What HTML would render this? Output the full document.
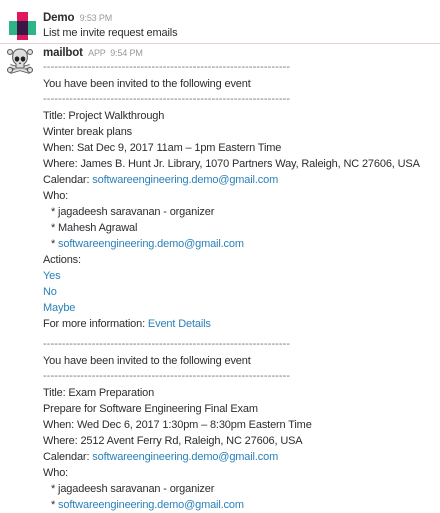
<!DOCTYPE html>
<html><head><style>
body{margin:0;width:440px;height:505px;overflow:hidden;background:#fff;font-family:"Liberation Sans",sans-serif;color:#2c2d30;position:relative}
.l{position:absolute;left:43px;font-size:11px;line-height:16px;white-space:nowrap;letter-spacing:-0.15px}
.a{color:#2a80b9}
.ind{left:51px}
.n{font-weight:bold;font-size:11.5px}
.t{color:#9a9a9a;font-size:9px;font-weight:normal}
.d{color:#777;letter-spacing:0.08px}
</style></head><body>
<div class="l d" style="top:-10px;left:140px">------------------------------------------------------------------</div>
<div style="position:absolute;left:17px;top:12px;width:11px;height:28px;background:#e0195e"></div>
<div style="position:absolute;left:9px;top:21px;width:27px;height:14px;background:#2fb48a"></div>
<div style="position:absolute;left:17px;top:21px;width:11px;height:14px;background:#3b1745"></div>
<div class="l" style="top:10px"><span class="n">Demo</span> <span class="t">&nbsp;9:53 PM</span></div>
<div class="l" style="top:25px">List me invite request emails</div>
<div style="position:absolute;left:0;top:43px;width:440px;height:1px;background:#eccfd0"></div>
<svg style="position:absolute;left:7px;top:47px" width="26" height="27" viewBox="0 0 26 27">
<g fill="#ddd" stroke="#555" stroke-width="1"><path d="M3 19 L23 25 M23 19 L3 25" stroke-width="4" stroke="#555"/><path d="M3 19 L23 25 M23 19 L3 25" stroke-width="2.4" stroke="#ddd"/>
<circle cx="3" cy="5" r="2.5"/><circle cx="23" cy="5" r="2.5"/><circle cx="3" cy="23" r="2.5"/><circle cx="23" cy="23" r="2.5"/>
<path d="M13 2 C6 2 5 8 6 13 C7 16 8 16 9 17 L9 21 L17 21 L17 17 C18 16 19 16 20 13 C21 8 20 2 13 2Z"/></g>
<ellipse cx="10" cy="12" rx="2.3" ry="2.6" fill="#222"/><ellipse cx="16" cy="12" rx="2.3" ry="2.6" fill="#222"/><path d="M13 15 l-1 2 h2z" fill="#222"/>
</svg>
<div class="l" style="top:45px"><span class="n">mailbot</span> <span class="t">&nbsp;APP &nbsp;9:54 PM</span></div>
<div class="l d" style="top:59px">------------------------------------------------------------------</div>
<div class="l" style="top:76px">You have been invited to the following event</div>
<div class="l d" style="top:91px">------------------------------------------------------------------</div>
<div class="l" style="top:108px">Title: Project Walkthrough</div>
<div class="l" style="top:124px">Winter break plans</div>
<div class="l" style="top:140px">When: Sat Dec 9, 2017 11am – 1pm Eastern Time</div>
<div class="l" style="top:156px">Where: James B. Hunt Jr. Library, 1070 Partners Way, Raleigh, NC 27606, USA</div>
<div class="l" style="top:172px">Calendar: <span class="a">softwareengineering.demo@gmail.com</span></div>
<div class="l" style="top:188px">Who:</div>
<div class="l ind" style="top:204px">* jagadeesh saravanan - organizer</div>
<div class="l ind" style="top:220px">* Mahesh Agrawal</div>
<div class="l ind" style="top:236px">* <span class="a">softwareengineering.demo@gmail.com</span></div>
<div class="l" style="top:252px">Actions:</div>
<div class="l a" style="top:268px">Yes</div>
<div class="l a" style="top:284px">No</div>
<div class="l a" style="top:300px">Maybe</div>
<div class="l" style="top:316px">For more information: <span class="a">Event Details</span></div>
<div class="l d" style="top:336px">------------------------------------------------------------------</div>
<div class="l" style="top:353px">You have been invited to the following event</div>
<div class="l d" style="top:368px">------------------------------------------------------------------</div>
<div class="l" style="top:385px">Title: Exam Preparation</div>
<div class="l" style="top:401px">Prepare for Software Engineering Final Exam</div>
<div class="l" style="top:417px">When: Wed Dec 6, 2017 1:30pm – 8:30pm Eastern Time</div>
<div class="l" style="top:433px">Where: 2512 Avent Ferry Rd, Raleigh, NC 27606, USA</div>
<div class="l" style="top:449px">Calendar: <span class="a">softwareengineering.demo@gmail.com</span></div>
<div class="l" style="top:465px">Who:</div>
<div class="l ind" style="top:481px">* jagadeesh saravanan - organizer</div>
<div class="l ind" style="top:497px">* <span class="a">softwareengineering.demo@gmail.com</span></div>
</body></html>
